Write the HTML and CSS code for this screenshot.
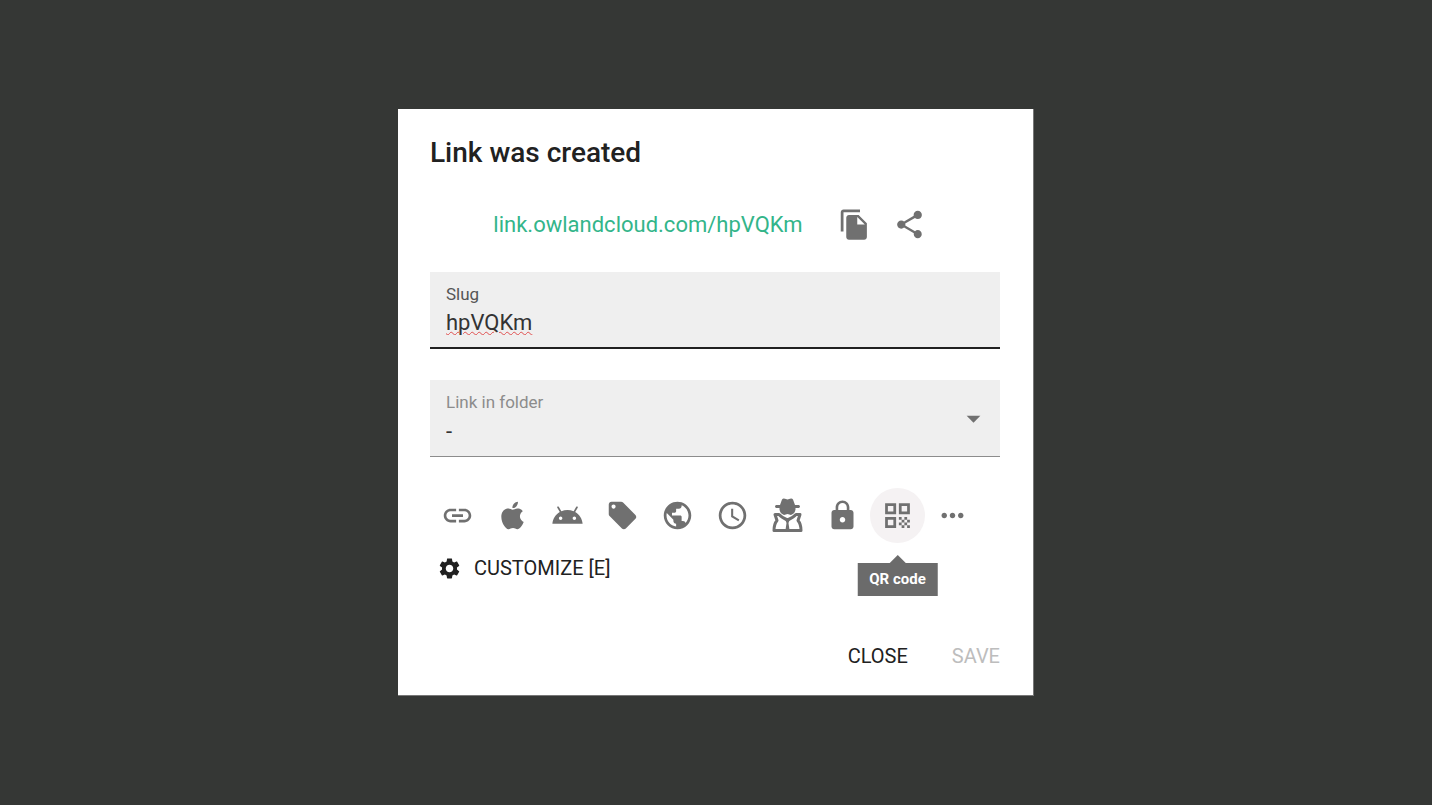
FILE: index.html
```html
<!DOCTYPE html>
<html lang="en">
<head>
  <meta charset="UTF-8">
  <meta name="viewport" content="width=device-width, initial-scale=1.0">
  <title>Link was created</title>
  <link rel="stylesheet" href="styles.css">
</head>
<body>
  <main class="dialog">
    <h1 class="title">Link was created</h1>

    <div class="link-row">
      <a class="short-link" href="#">link.owlandcloud.com/hpVQKm</a>
      <button class="icon-btn" aria-label="Copy">
        <svg viewBox="0 0 24 24"><path d="M16 1H4c-1.100 0-2 .9-2 2v14h2V3h12V1zm-1 4l6 6v10c0 1.100-.9 2-2 2H7.990C6.890 23 6 22.100 6 21l.01-14c0-1.100.89-2 1.990-2h7zm-1 7h5.500L14 6.500V12z"/></svg>
      </button>
      <button class="icon-btn" aria-label="Share">
        <svg viewBox="0 0 24 24"><path d="M18 16.080c-.76 0-1.440.3-1.960.77L8.910 12.700c.05-.23.09-.46.09-.7s-.04-.47-.09-.7l7.050-4.110c.54.5 1.250.81 2.040.81 1.660 0 3-1.340 3-3s-1.340-3-3-3-3 1.340-3 3c0 .24.04.47.09.7L8.040 9.810C7.500 9.310 6.790 9 6 9c-1.660 0-3 1.340-3 3s1.340 3 3 3c.79 0 1.500-.31 2.040-.81l7.120 4.160c-.05.21-.08.43-.08.65 0 1.610 1.310 2.920 2.920 2.920s2.920-1.310 2.920-2.920-1.310-2.920-2.920-2.920z"/></svg>
      </button>
    </div>

    <div class="field focused">
      <label for="slug">Slug</label>
      <input type="text" id="slug" value="hpVQKm" spellcheck="false">
    </div>

    <div class="field">
      <label for="folder">Link in folder</label>
      <select id="folder">
        <option>-</option>
      </select>
      <svg class="arrow" viewBox="0 0 24 24"><path d="M7 10l5 5 5-5z"/></svg>
    </div>

    <div class="toolbar">
      <button class="icon-btn" aria-label="Link">
        <svg viewBox="0 0 24 24"><path d="M3.900 12c0-1.710 1.390-3.100 3.100-3.100h4V7H7c-2.760 0-5 2.240-5 5s2.240 5 5 5h4v-1.900H7c-1.710 0-3.100-1.390-3.100-3.100zM8 13h8v-2H8v2zm9-6h-4v1.900h4c1.710 0 3.100 1.390 3.100 3.100s-1.390 3.100-3.100 3.100h-4V17h4c2.760 0 5-2.240 5-5s-2.240-5-5-5z"/></svg>
      </button>
      <button class="icon-btn" aria-label="iOS">
        <svg viewBox="0 0 24 24"><path d="M18.710 19.500C17.880 20.740 17 21.950 15.660 21.970C14.320 22 13.890 21.180 12.370 21.180C10.840 21.180 10.370 21.950 9.100 22C7.790 22.050 6.800 20.680 5.960 19.470C4.250 17 2.940 12.450 4.700 9.390C5.570 7.870 7.130 6.910 8.820 6.880C10.100 6.860 11.320 7.750 12.110 7.750C12.890 7.750 14.370 6.680 15.920 6.840C16.570 6.870 18.390 7.100 19.560 8.820C19.470 8.880 17.390 10.100 17.410 12.630C17.440 15.650 20.060 16.660 20.090 16.670C20.060 16.740 19.670 18.110 18.710 19.500M13 3.500C13.730 2.670 14.940 2.040 15.940 2C16.070 3.170 15.600 4.350 14.900 5.190C14.210 6.040 13.070 6.700 11.950 6.610C11.800 5.460 12.360 4.260 13 3.500Z"/></svg>
      </button>
      <button class="icon-btn" aria-label="Android">
        <svg viewBox="0 0 24 24"><path d="M17.600 9.480l1.840-3.180c.16-.31.04-.69-.26-.85-.29-.15-.65-.06-.83.22l-1.880 3.240c-2.860-1.210-6.080-1.210-8.940 0L5.650 5.670c-.19-.29-.58-.38-.87-.2-.28.18-.37.54-.22.83L6.400 9.480C3.300 11.250 1.280 14.440 1 18h22c-.28-3.560-2.300-6.750-5.400-8.520zM7 15.250c-.69 0-1.250-.56-1.250-1.250s.56-1.250 1.250-1.250 1.250.56 1.250 1.250-.56 1.250-1.250 1.250zm10 0c-.69 0-1.250-.56-1.250-1.250s.56-1.250 1.250-1.250 1.250.56 1.250 1.250-.56 1.250-1.250 1.250z"/></svg>
      </button>
      <button class="icon-btn" aria-label="Tags">
        <svg viewBox="0 0 24 24"><path d="M21.410 11.580l-9-9C12.050 2.220 11.550 2 11 2H4c-1.100 0-2 .9-2 2v7c0 .55.22 1.050.59 1.420l9 9c.36.36.86.58 1.410.58.55 0 1.050-.22 1.410-.59l7-7c.37-.36.59-.86.59-1.410 0-.55-.23-1.060-.59-1.420zM5.500 7C4.670 7 4 6.330 4 5.500S4.670 4 5.500 4 7 4.670 7 5.500 6.330 7 5.500 7z"/></svg>
      </button>
      <button class="icon-btn" aria-label="Countries">
        <svg viewBox="0 0 24 24"><path d="M12 2C6.480 2 2 6.480 2 12s4.480 10 10 10 10-4.480 10-10S17.520 2 12 2zm-1 17.930c-3.950-.49-7-3.850-7-7.930 0-.62.08-1.210.21-1.790L9 15v1c0 1.100.9 2 2 2v1.930zm6.900-2.540c-.26-.81-1-1.390-1.900-1.390h-1v-3c0-.55-.45-1-1-1H8v-2h2c.55 0 1-.45 1-1V7h2c1.100 0 2-.9 2-2v-.41c2.930 1.190 5 4.060 5 7.410 0 2.080-.8 3.970-2.100 5.390z"/></svg>
      </button>
      <button class="icon-btn" aria-label="Expiration">
        <svg viewBox="0 0 24 24"><path d="M11.990 2C6.470 2 2 6.480 2 12s4.470 10 9.990 10C17.520 22 22 17.520 22 12S17.520 2 11.990 2zM12 20c-4.420 0-8-3.580-8-8s3.580-8 8-8 8 3.580 8 8-3.580 8-8 8zm.5-13H11v6l5.250 3.150.75-1.230-4.500-2.670z"/></svg>
      </button>
      <button class="icon-btn" aria-label="Cloaking">
        <svg viewBox="0 0 33 33">
          <path d="M9 6L11 .5Q12-1 14-.3L16.500.5 19-.3Q21-1 22 .5L24 6H28Q30 7.500 28 9H24.500V10.500Q24 14.500 20 16L16.500 15 13 16Q9 14.500 8.500 10.500V9H5Q3 7.500 5 6Z"/>
          <path class="coat" d="M8 15.500H4L6 21.500Q3 25 3 31.500H30Q30 25 27 21.500L29 15.500H25Q22.500 18.500 16.500 21 10.500 18.500 8 15.500Z"/>
          <path d="M14 20H19L17.500 24 18.500 31H14.500L15.500 24Z"/>
        </svg>
      </button>
      <button class="icon-btn" aria-label="Password">
        <svg viewBox="0 0 24 24"><path d="M18 8h-1V6c0-2.760-2.240-5-5-5S7 3.240 7 6v2H6c-1.100 0-2 .9-2 2v10c0 1.100.9 2 2 2h12c1.100 0 2-.9 2-2V10c0-1.100-.9-2-2-2zm-6 9c-1.100 0-2-.9-2-2s.9-2 2-2 2 .9 2 2-.9 2-2 2zm3.100-9H8.900V6c0-1.710 1.390-3.100 3.100-3.100 1.710 0 3.100 1.390 3.100 3.100v2z"/></svg>
      </button>
      <button class="icon-btn active" aria-labelledby="qr-tip">
        <svg viewBox="0 0 24 24"><path d="M3 11h8V3H3v8zm2-6h4v4H5V5zM3 21h8v-8H3v8zm2-6h4v4H5v-4zM13 3v8h8V3h-8zm6 6h-4V5h4v4zM19 19h2v2h-2zM13 13h2v2h-2zM15 15h2v2h-2zM13 17h2v2h-2zM15 19h2v2h-2zM17 17h2v2h-2zM17 13h2v2h-2zM19 15h2v2h-2z"/></svg>
        <span class="tooltip" id="qr-tip">QR code</span>
      </button>
      <button class="icon-btn" aria-label="More">
        <svg viewBox="0 0 24 24"><path d="M6 10c-1.100 0-2 .9-2 2s.9 2 2 2 2-.9 2-2-.9-2-2-2zm12 0c-1.100 0-2 .9-2 2s.9 2 2 2 2-.9 2-2-.9-2-2-2zm-6 0c-1.100 0-2 .9-2 2s.9 2 2 2 2-.9 2-2-.9-2-2-2z"/></svg>
      </button>
    </div>

    <button class="text-btn customize">
      <svg viewBox="0 0 24 24"><path d="M19.140 12.940c.04-.3.06-.61.06-.94 0-.32-.02-.64-.07-.94l2.030-1.580c.18-.14.23-.41.12-.61l-1.920-3.320c-.12-.22-.37-.29-.59-.22l-2.390.96c-.5-.38-1.030-.7-1.620-.94l-.36-2.540c-.04-.24-.24-.41-.48-.41h-3.840c-.24 0-.43.17-.47.41l-.36 2.540c-.59.24-1.130.57-1.620.94l-2.390-.96c-.22-.08-.47 0-.59.22L2.740 8.870c-.12.21-.08.47.12.61l2.030 1.580c-.05.3-.09.63-.09.94s.02.64.07.94l-2.030 1.580c-.18.14-.23.41-.12.61l1.920 3.320c.12.22.37.29.59.22l2.390-.96c.5.38 1.030.7 1.620.94l.36 2.540c.05.24.24.41.48.41h3.840c.24 0 .44-.17.47-.41l.36-2.540c.59-.24 1.130-.56 1.620-.94l2.390.96c.22.08.47 0 .59-.22l1.920-3.320c.12-.22.07-.47-.12-.61l-2.010-1.580zM12 15.600c-1.980 0-3.600-1.620-3.600-3.600s1.620-3.600 3.600-3.600 3.600 1.620 3.600 3.600-1.620 3.600-3.600 3.600z"/></svg>
      CUSTOMIZE [E]
    </button>

    <div class="actions">
      <button class="text-btn">CLOSE</button>
      <button class="text-btn" disabled>SAVE</button>
    </div>
  </main>
</body>
</html>
```
FILE: styles.css
```css
* {
  box-sizing: border-box;
}

body {
  margin: 0;
  min-height: 100vh;
  display: flex;
  align-items: center;
  justify-content: center;
  background-color: #353735;
  color: #212121;
  font-family: Roboto, "Liberation Sans", sans-serif;
}

.dialog {
  width: 100%;
  max-width: 636px;
  padding: 24px 33px 14px 32px;
  background-color: #fff;
  border-right: 1px solid #777;
  border-bottom: 1px solid #777;
}

.title {
  margin: 0;
  font-size: 28px;
  line-height: 40px;
  font-weight: 500;
}

.link-row {
  display: flex;
  align-items: center;
  justify-content: center;
  margin: 24px 0 20px;
}

.short-link {
  margin-right: 24px;
  color: #33b58a;
  font-size: 22px;
  text-decoration: none;
}

button {
  padding: 0;
  border: none;
  background: none;
  font-family: inherit;
  cursor: pointer;
}

.icon-btn {
  position: relative;
  display: flex;
  flex: none;
  align-items: center;
  justify-content: center;
  width: 55px;
  height: 55px;
  border-radius: 50%;
  color: #707070;
}

.icon-btn.active {
  background-color: #f5f2f3;
}

svg {
  width: 33px;
  height: 33px;
  fill: currentColor;
  overflow: visible;
}

.coat {
  fill: none;
  stroke: currentColor;
  stroke-width: 3;
  stroke-linejoin: round;
}

.field {
  position: relative;
  margin-bottom: 31px;
}

.field label {
  position: absolute;
  top: 12px;
  left: 16px;
  color: #8c8c8c;
  font-size: 17px;
  line-height: 20px;
}

.field input,
.field select {
  display: block;
  width: 100%;
  height: 77px;
  padding: 26px 16px 0;
  border: none;
  border-bottom: 1px solid #8c8c8c;
  border-radius: 0;
  outline: none;
  appearance: none;
  background-color: #efefef;
  color: #333;
  font-family: inherit;
  font-size: 22px;
}

.field.focused label {
  color: #555;
}

.field.focused input {
  border-bottom: 2px solid #212121;
  text-decoration: underline wavy #e05050 1px;
}

.arrow {
  position: absolute;
  top: 22px;
  right: 10px;
  color: #707070;
  pointer-events: none;
}

.toolbar {
  display: flex;
}

.tooltip {
  position: absolute;
  top: 75px;
  left: 50%;
  padding: 0 12px;
  transform: translateX(-50%);
  background-color: #6b6b6b;
  color: #fff;
  font-size: 15px;
  line-height: 33px;
  font-weight: 700;
  white-space: nowrap;
}

.tooltip::before {
  content: "";
  position: absolute;
  bottom: 100%;
  left: 50%;
  margin-left: -8px;
  border: 8px solid transparent;
  border-top: none;
  border-bottom-color: #6b6b6b;
}

.text-btn {
  height: 50px;
  color: #212121;
  font-size: 20px;
}

.text-btn:disabled {
  color: #bdbdbd;
  cursor: default;
}

.customize {
  display: flex;
  align-items: center;
  gap: 12px;
  padding-left: 7px;
}

.customize svg {
  width: 25px;
  height: 25px;
}

.actions {
  display: flex;
  justify-content: flex-end;
  gap: 44px;
  margin-top: 38px;
}
```
